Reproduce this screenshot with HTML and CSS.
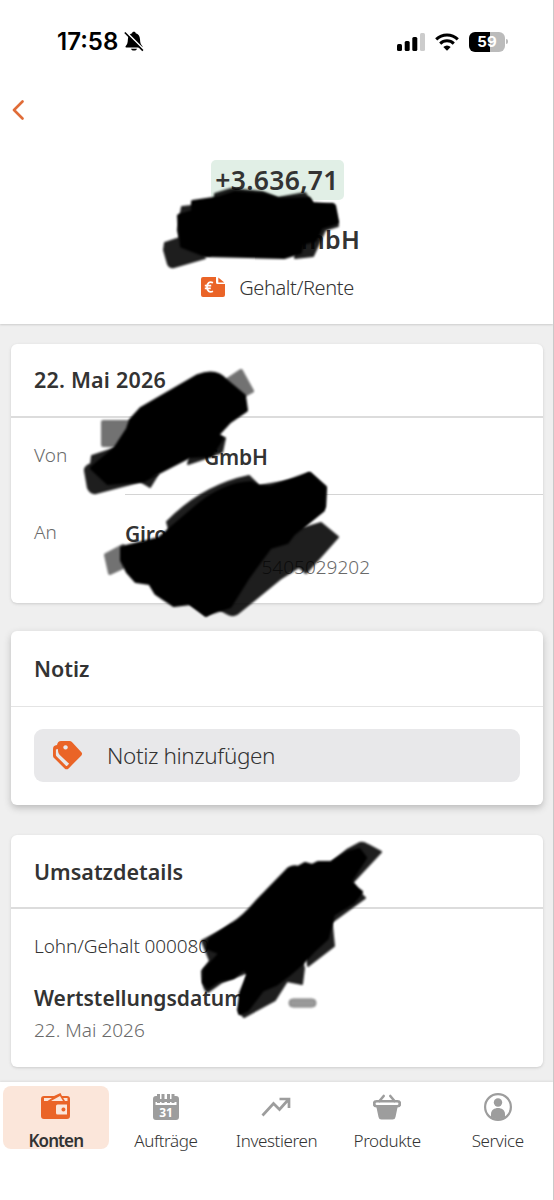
FILE: index.html
```html
<!DOCTYPE html>
<html lang="de">
<head>
<meta charset="utf-8">
<title>Umsatz</title>
<link rel="stylesheet" href="styles.css">
</head>
<body>
<div class="app">
  <header class="top">
    <div class="status">
      <span class="time">17:58</span>
      <svg class="bell" width="20" height="21" viewBox="0 0 20 21"><path d="M2.2 16.4C1.4 16.4 1.2 15.5 1.8 14.9 3.2 13.4 3.7 12 3.9 8.300 4.100 4.700 5.600 2.700 8.100 2.200 8.400.4 11.400.4 11.700 2.200 14.300 2.700 15.800 4.700 16 8.300c.2 3.700.8 5.100 2.200 6.600.6.600.3 1.500-.5 1.500zM7 17.700h6c-.5 2.500-5.500 2.500-6 0z"/><path d="M2 .9 19 17.900" stroke="#fff" stroke-width="2"/><path d="M.8 1.500 18.900 19.600" stroke="#000" stroke-width="1.600"/></svg>
      <span class="grow"></span>
      <svg class="signal" width="28" height="18" viewBox="0 0 28 18"><rect y="11" width="5" height="7" rx="1.500"/><rect x="7.700" y="8" width="5" height="10" rx="1.500"/><rect x="15.300" y="4" width="5" height="14" rx="1.500"/><rect x="23" width="5" height="18" rx="1.500" fill="#ccc"/></svg>
      <svg class="wifi" width="24" height="18" viewBox="0 0 24 18"><g fill="none" stroke="#000" stroke-width="3"><path d="M1.200 6.300a15.500 15.500 0 0 1 21.600 0"/><path d="M5.200 10.600a9.800 9.800 0 0 1 13.600 0"/></g><path d="M8.300 13.900a5.300 5.300 0 0 1 7.400 0L12 17.700z"/></svg>
      <span class="battery"><b>59</b></span><i class="nub"></i>
    </div>
    <svg class="back" width="12" height="20" viewBox="0 0 12 20"><path d="M10.500 1.500 2 10l8.500 8.500" fill="none" stroke="#e06c38" stroke-width="2.600" stroke-linecap="round" stroke-linejoin="round"/></svg>
    <div class="amount">+3.636,71</div>
    <div class="payer">mbH</div>
    <div class="category">
      <svg width="24" height="20" viewBox="0 0 24 20"><path fill="#ea6427" d="M2 0h13v5.500a1.500 1.500 0 0 0 1.500 1.500H24v11a2 2 0 0 1-2 2H2a2 2 0 0 1-2-2V2a2 2 0 0 1 2-2zM17.300.5 23.300 5.500h-6z"/><path d="M12 5.700C8.500 4 6 6 6 10s2.500 6 6 4.300M3.800 8.700h6.400M3.800 11.300h6" fill="none" stroke="#fff" stroke-width="1.700"/></svg>
      <span>Gehalt/Rente</span>
    </div>
  </header>

  <main class="content">
    <section class="card transfer">
      <h2>22. Mai 2026</h2>
      <div class="party"><span class="label">Von</span><span class="value from">GmbH</span></div>
      <div class="party second"><span class="label">An</span><span class="value to">Giro</span></div>
      <div class="iban">5405029202</div>
    </section>
    <section class="card note">
      <h2>Notiz</h2>
      <div class="add">
        <svg width="30" height="30" viewBox="0 0 30 30"><path fill="#ea6427" fill-rule="evenodd" d="M8 0h8.500c1 0 1.700.3 2.400 1l9.500 10.200c.9 1 .9 2.300 0 3.200L15.600 27.400c-1.200 1.200-2.800 1.200-4 0L1.300 17.300C.4 16.400 0 15.600 0 14.400V8c0-2.300 1-3.500 4-3.900C4.600 1.500 5.800 0 8 0zM2.900 8.500v5.300c0 .8.200 1.200.8 1.800l9 8.800c.7.700 1 .7 1.700 0l1.700-1.700L6.800 14C5.300 12.500 5 11 4.900 8zM12.500 4.200a2.200 2.200 0 1 0 .1 0z"/></svg>
        <span>Notiz hinzufügen</span>
      </div>
    </section>
    <section class="card details">
      <h2>Umsatzdetails</h2>
      <p class="purpose">Lohn/Gehalt 000080</p>
      <h3>Wertstellungsdatum</h3>
      <p class="date">22. Mai 2026</p>
    </section>
  </main>

  <nav class="tabs">
    <div class="tab active"><div class="pill">
      <svg width="30" height="28" viewBox="0 0 30 28"><path fill="#ea6427" fill-rule="evenodd" d="M3 3h10l6.500-3L21 3h5a3 3 0 0 1 3 3v17a3 3 0 0 1-3 3H3a3 3 0 0 1-3-3V6a3 3 0 0 1 3-3zM3 5v3h3.500L11 5zM10 8h12l-3-5zM22.200 5 24 8h2.500V5zM16.500 11.500a1.500 1.500 0 0 0-1.500 1.500v7a1.500 1.500 0 0 0 1.500 1.500H26V11.500zM22.500 14.500a2 2 0 1 1-.1 0z"/></svg>
      <span>Konten</span></div></div>
    <div class="tab"><svg width="26" height="28" viewBox="0 0 26 28"><path fill="#9d9d9d" fill-rule="evenodd" d="M3 3h1V1h3v5h1.500V1h3v5H14V1h3v5h1.500V1h3v2H23a3 3 0 0 1 3 3v18a3 3 0 0 1-3 3H3a3 3 0 0 1-3-3V6a3 3 0 0 1 3-3zM2.500 9v3h21V9h-2v1h-3V9H17v1h-3V9h-2.500v1h-3V9H7v1H4V9z"/><text x="13" y="23.500" text-anchor="middle" class="day">31</text></svg><span>Aufträge</span></div>
    <div class="tab"><svg width="30" height="28" viewBox="0 0 30 28"><path d="m1.500 22.500 11-12 6 6L27 7M18.500 6H28v9" fill="none" stroke="#9d9d9d" stroke-width="2.700"/></svg><span>Investieren</span></div>
    <div class="tab"><svg width="28" height="28" viewBox="0 0 28 28"><path fill="#9d9d9d" fill-rule="evenodd" d="M3.500 7h21a3.500 3.500 0 0 1 0 7.500L22.500 24a3 3 0 0 1-3 2.500h-11a3 3 0 0 1-3-2.500L3.500 14.500a3.500 3.500 0 0 1 0-7.500zM3.800 9.500a1.200 1.200 0 0 0 0 2.500h20.400a1.200 1.200 0 0 0 0-2.500z"/><path d="m6.500 8 4.200-5M21.500 8l-4.200-5" stroke="#9d9d9d" stroke-width="2.600" stroke-linecap="round"/></svg><span>Produkte</span></div>
    <div class="tab"><svg width="28" height="28" viewBox="0 0 28 28"><circle cx="14" cy="14" r="12.900" fill="none" stroke="#9d9d9d" stroke-width="2.200"/><circle cx="14" cy="9.500" r="4.200" fill="#9d9d9d"/><path fill="#9d9d9d" d="M7 24v-3c0-8 14-8 14 0v3c-4 3-10 3-14 0z"/></svg><span>Service</span></div>
  </nav>

  <svg class="marker" width="554" height="1200" viewBox="0 0 554 1200">
    <g class="soft">
      <path d="M165 243 183 237 205 258 174 267Q170 268 168 264L164 250z"/>
      <path d="M215 194 231 189 262 192 278 198 305 193 312 203 300 216H215z"/>
      <path d="M182 207 210 204V255L183 253 178 230zM300 206 333 204 338 226 325 230 313 256 295 258z"/>
      <path d="M194 440 225 438 222 452 200 460 188 464zM138 480 158 474 150 487z"/>
      <path d="M92 456 125 445 142 481 96 493Q91 494 88 488L85 471Q84 467 91 464z"/>
      <path d="M167 522Q202 486 249 476L259 486 300 479 310 473 326 487 325 507 298 530 321 523 338 537 306 573 299 567 280 579 237 614Q232 617 226 613L217 608 206 616 190 603z"/>
      <path d="M332 862 347 850 360 843Q363 842 368 845L381 852 352 883zM333 890 353 886 365 898 332 922z"/>
      <path d="M202 941 232 925 248 972 222 982 208 992Q203 991 202 971L210 961zM250 965 302 962 304 968 302 984 287 981 275 1000 244 1017 238 1010z"/>
      <path d="M302 917 331 916 334 946 308 966z"/>
    </g>
    <g class="faint">
      <path d="M103 422H138V446L103 445zM226 381 241 371 252 391 235 400zM106 555 123 546V567L110 573z"/>
    </g>
    <g class="core">
      <path d="M193 202 220 198 235 193 263 195 278 200 309 199 312 204 334 206 337 222 321 227 315 240 302 243 300 252 284 257 205 255 182 246 179 216 193 212z"/>
      <path d="M141 409 198 376Q216 369 226 381L244 396 246 410 230 421 217 435 222 438 211 455 190 456 155 474 144 480 108 483 92 468 115 449 128 429 131 420z"/>
      <path d="M159 539 193 510Q222 484 251 483L258 487 271 488 309 474 324 488 323 510 293 534 287 542 270 547 248 577 230 606 206 614 190 603 174 605 156 593 150 583 136 581 128 572 122 560 122 548z"/>
      <path d="M233 924Q244 917 256 903L289 869Q294 866 298 868L305 864 312 866 318 863 332 863 348 853 359 850 365 858 350 881 357 889 361 892 353 902 333 914 327 938 314 950 302 963 288 975 276 984 262 990 247 1010 240 1013 241 993 249 974 244 968 233 977 218 980 208 987 204 982 205 970 221 953 208 948 210 940z"/>
    </g>
    <rect class="dash" x="289" y="999" width="27" height="8" rx="4"/>
  </svg>
</div>
</body>
</html>
```
FILE: styles.css
```css
* { box-sizing: border-box; }
body { margin: 0; background: #efefef; font-family: "Noto Sans", sans-serif; color: #333; }
h2, h3, p { margin: 0; }
svg { display: block; flex: none; }
.app { position: relative; width: 554px; height: 1200px; overflow: hidden; display: flex; flex-direction: column; border-right: 1px solid #c9c9c9; }
.top { height: 324px; flex: none; background: #fff; box-shadow: 0 1px 2px #ccc; display: flex; flex-direction: column; align-items: center; }
.status { width: 100%; height: 82px; display: flex; align-items: center; padding: 1px 45px 0 57px; }
.time { font: 600 24px/30px Inter, sans-serif; color: #000; letter-spacing: 0; width: 67px; }
.grow { flex: 1; }
.signal { margin-right: 10px; }
.wifi { margin-right: 10px; }
.battery { width: 36px; height: 20px; border-radius: 6px; background: linear-gradient(90deg, #000 58%, #bbb 58%); color: #fff; display: flex; align-items: center; justify-content: center; font: 15px/20px Inter, sans-serif; }
.nub { width: 2px; height: 5px; margin-left: 1px; background: #bbb; border-radius: 0 2px 2px 0; }
.back { align-self: flex-start; margin: 18px 0 0 12px; }
.amount { margin: 40px 0 0 1px; width: 133px; height: 40px; border-radius: 5px; background: #e1efe6; text-align: center; font-weight: 600; font-size: 26.500px; line-height: 40px; letter-spacing: .3px; }
.payer { margin-top: 21px; align-self: flex-end; margin-right: 193px; font-weight: 600; font-size: 25px; line-height: 36px; letter-spacing: .2px; }
.category { display: flex; align-items: center; gap: 14px; margin: 14px 0 0 2px; height: 32px; font-size: 20px; font-weight: 350; letter-spacing: -.4px; }
.content { flex: 1; padding: 20px 10px 0 11px; display: flex; flex-direction: column; }
.card { background: #fff; border-radius: 6px; box-shadow: 0 1px 3px #ccc; flex: none; width: 532px; }
.card h2 { padding-left: 23px; font-size: 21.500px; font-weight: 600; border-bottom: 2px solid #dcdcdc; height: 74px; line-height: 72px; letter-spacing: -.05px; }
.transfer { height: 259px; }
.transfer h2 { letter-spacing: .2px; }
.party { display: flex; height: 77px; padding-left: 23px; line-height: 74px; }
.label { width: 91px; font-size: 19px; font-weight: 350; color: #6a6a6a; }
.value { flex: 1; font-size: 21px; font-weight: 600; line-height: 78px; letter-spacing: -.2px; }
.party:not(.second) .value { border-bottom: 1px solid #d4d4d4; }
.from { padding-left: 79px; }
.iban { width: 359px; margin-top: -17px; text-align: right; font-size: 19px; line-height: 26px; font-weight: 350; color: #6a6a6a; }
.second { height: 76px; }
.note { margin-top: 28px; height: 174px; box-shadow: 0 3px 7px #bbb; }
.note h2 { height: 76px; line-height: 75px; border-bottom: 1px solid #e4e4e4; }
.add { margin: 22px 23px 0; height: 53px; border-radius: 9px; background: #e8e8ea; display: flex; align-items: center; padding-left: 19px; gap: 24px; font-size: 22.500px; font-weight: 350; letter-spacing: -.4px; }
.details { margin-top: 30px; height: 232px; }
.details h2 { letter-spacing: 0; line-height: 73px; }
.purpose { padding: 23px 0 0 23px; font-size: 19px; font-weight: 350; line-height: 28px; letter-spacing: -.1px; }
.details h3 { padding: 23px 0 0 23px; font-size: 21px; line-height: 30px; font-weight: 600; }
.date { padding: 3px 0 0 23px; font-size: 19px; font-weight: 350; line-height: 28px; color: #6a6a6a; }
.tabs { height: 118px; flex: none; background: #fff; box-shadow: 0 -1px 2px #ddd; display: grid; grid-template-columns: repeat(5, 110.600px); padding-top: 4px; }
.tab { display: flex; flex-direction: column; align-items: center; font-size: 17px; padding-top: 7px; font-weight: 350; line-height: 26px; letter-spacing: -.4px; }
.tab span { margin-top: 7px; }
.tab.active { padding: 0 0 0 1px; font-weight: 600; }
.pill { width: 106px; height: 63px; border-radius: 8px; background: #fbe6da; padding-top: 7px; display: flex; flex-direction: column; align-items: center; letter-spacing: -.9px; }
.day { font: 700 12px "Noto Sans", sans-serif; fill: #fff; letter-spacing: 0; }
.marker { position: absolute; left: 0; top: 0; pointer-events: none; }
.soft, .core, .faint { filter: blur(.9px); stroke: #000; stroke-width: 2px; stroke-linejoin: round; }
.soft { opacity: .88; }
.faint { opacity: .55; stroke-width: 4px; }
.core { stroke-width: 4px; }
.dash { fill: #999; stroke: #777; filter: blur(.9px); }
```
